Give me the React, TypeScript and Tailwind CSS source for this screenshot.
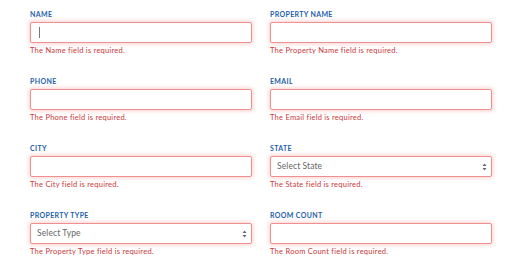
import React from "react";

type Field = { label: string; err: string; select?: string; cursor?: boolean };

const fields: Field[] = [
  { label: "NAME", err: "The Name field is required.", cursor: true },
  { label: "PROPERTY NAME", err: "The Property Name field is required." },
  { label: "PHONE", err: "The Phone field is required." },
  { label: "EMAIL", err: "The Email field is required." },
  { label: "CITY", err: "The City field is required." },
  { label: "STATE", err: "The State field is required.", select: "Select State" },
  { label: "PROPERTY TYPE", err: "The Property Type field is required.", select: "Select Type" },
  { label: "ROOM COUNT", err: "The Room Count field is required." },
];

function Arrows() {
  return (
    <svg width="5" height="8" viewBox="0 0 5 8" className="shrink-0">
      <path d="M2.5 0.5 L4.5 3 L0.5 3 Z" fill="#666" />
      <path d="M2.5 7.5 L4.5 5 L0.5 5 Z" fill="#666" />
    </svg>
  );
}

export default function App() {
  return (
    <div
      className="w-[512px] h-[271px] bg-white overflow-hidden pl-[30px] pt-[9px]"
      style={{ fontFamily: "Lato, 'Open Sans', sans-serif" }}
    >
      <div className="grid grid-cols-[222px_222px] gap-x-[18px] gap-y-[20px]">
        {fields.map((f) => (
          <div key={f.label} className="flex flex-col">
            <div className="h-[10px] text-[7px] leading-[10px] font-bold text-[#1f5ea8] tracking-[0.35px]">
              {f.label}
            </div>
            <div className="mt-[3px] h-[21px] rounded-[2px] border border-[#ef8f8f] bg-white shadow-[0_0_4px_1px_rgba(240,100,100,0.3)] flex items-center pl-[6px] pr-[4px]">
              {f.cursor && <div className="w-px h-[11px] bg-[#777] ml-[2px]" />}
              {f.select && (
                <>
                  <span className="flex-1 text-[8.5px] text-[#666] tracking-[0.1px]">{f.select}</span>
                  <Arrows />
                </>
              )}
            </div>
            <div className="mt-[3px] h-[10px] text-[7.5px] leading-[10px] text-[#c9383a] tracking-[0.25px] whitespace-nowrap">
              {f.err}
            </div>
          </div>
        ))}
      </div>
    </div>
  );
}
